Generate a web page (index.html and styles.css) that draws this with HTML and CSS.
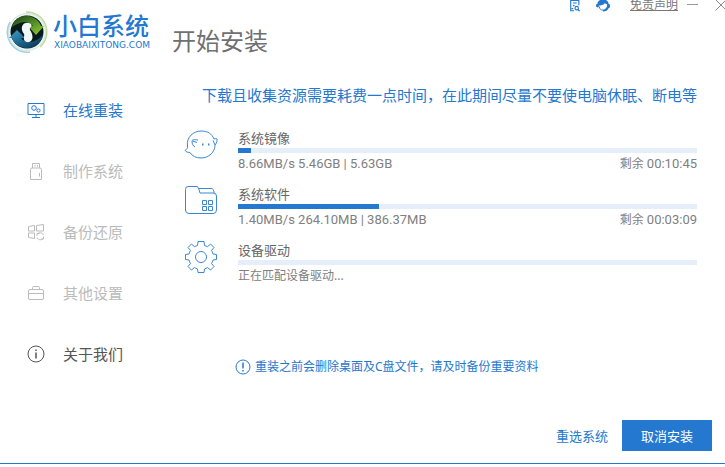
FILE: index.html
```html
<!DOCTYPE html>
<html lang="zh-CN">
<head>
<meta charset="utf-8">
<meta name="viewport" content="width=device-width, initial-scale=1">
<title>小白系统</title>
<link rel="stylesheet" href="styles.css">
</head>
<body>
<div class="window">
  <header class="header">
    <div class="brand">
      <svg class="logo" viewBox="0 0 44 44" aria-hidden="true">
        <defs>
          <linearGradient id="green" x1="0" y1="0" x2="1" y2="1"><stop offset="0" stop-color="#183b18"/><stop offset=".5" stop-color="#4f8c25"/><stop offset="1" stop-color="#9bcf35"/></linearGradient>
          <linearGradient id="blue" x1="0" y1="0" x2="1" y2="1"><stop offset="0" stop-color="#3f9fc9"/><stop offset=".5" stop-color="#1c6791"/><stop offset="1" stop-color="#092a42"/></linearGradient>
        </defs>
        <circle cx="22" cy="22" r="18.5" fill="#edf5f2" stroke="#d5e6df"/>
        <path d="M21 2A20 20 0 0 1 35 37" fill="none" stroke="#bcdc9a" stroke-width="1.5"/>
        <path d="M25 42A20 20 0 0 1 5 12" fill="none" stroke="#9fd0e4" stroke-width="1.5"/>
        <circle cx="22" cy="22" r="16.5" fill="#0b1a1c"/>
        <path d="M7 17C10 7 20 3 29 8C33 10 35 13 36 16H39L31 25L23 16H28C25 12 18 9 7 17Z" fill="url(#green)"/>
        <path d="M38 25C35 37 23 41 14 36C10 34 8 31 7 28H4L12 20L20 28H16C20 34 29 34 38 25Z" fill="url(#blue)"/>
        <path d="M26 14C21 11 16 14 17 20C18 24 20 23 19 27C18 31 22 34 26 31C29 28 27 23 25 20C24 17 28 17 26 14Z" fill="#f2f7f8"/>
      </svg>
      <div class="brand-text">
        <span class="brand-name">小白系统</span>
        <span class="brand-site">XIAOBAIXITONG.COM</span>
      </div>
    </div>
    <h1 class="title">开始安装</h1>
    <div class="tools">
      <button class="tool" type="button" aria-label="日志">
        <svg width="12" height="12" viewBox="0 0 12 14"><path d="M5 12.5H1V.5H10.500V6M3.500 3.500H8M3.500 6.500H5.500M2 10H4" fill="none" stroke="#2478cf" stroke-width="1.300"/><circle cx="8" cy="9.500" r="2" fill="none" stroke="#2478cf" stroke-width="1.300"/><path d="M9.500 11L11.500 13" stroke="#2478cf" stroke-width="1.500"/></svg>
      </button>
      <button class="tool tool-service" type="button" aria-label="客服">
        <svg width="16" height="12" viewBox="0 1 16 13"><path d="M2 5C2-1 14-1 14 5L15.500 6V9L14 10C13 12.500 11 13.500 8 13.500V11.500C10.500 11.500 12.500 9.500 12.500 6L10 4.500C8 6.500 6 7 3.500 7V8.500L2 9L.500 8V6Z" fill="#2478cf"/><path d="M4 8C4 11 6 12 8 12" fill="none" stroke="#2478cf"/></svg>
      </button>
      <a class="disclaimer" href="#">免责声明</a>
      <button class="tool" type="button" aria-label="最小化"><svg width="11" height="12" viewBox="0 0 11 12"><path d="M0 4.500H11" stroke="#999"/></svg></button>
      <button class="tool tool-close" type="button" aria-label="关闭"><svg width="12" height="12" viewBox="0 0 12 12"><path d="M.500-.500L11.500 10.500M11.500-.500L.500 10.500" stroke="#8b8b8b"/></svg></button>
    </div>
  </header>

  <nav class="nav">
    <a class="nav-item active" href="#">
      <svg class="nav-icon" viewBox="0 0 18 18"><path d="M1 2.500H17V13.500H1ZM9 13.500V16M5 16.500H13" /><circle cx="7" cy="7" r="2.300"/><circle cx="11.500" cy="9.500" r="1.600"/></svg>
      <span>在线重装</span></a>
    <a class="nav-item" href="#">
      <svg class="nav-icon" viewBox="0 0 18 18"><path d="M5.500 6V1.500H12.500V6M5 6H13Q14.500 6 14.500 7.500V17.500H3.500V7.500Q3.500 6 5 6ZM8 3V4.500M10.500 3V4.500M12.500 11V14.500"/></svg>
      <span>制作系统</span></a>
    <a class="nav-item" href="#">
      <svg class="nav-icon" viewBox="0 0 18 18"><path d="M1.500 3.500L7.500 2.500V8H1.500ZM9.500 2.500L16.500 1.500V8H9.500ZM1.500 10H7.500V15.500L1.500 14.500ZM10 13V10.500H12.500M10 11C12 9 15.500 9.500 16.500 12M16.500 13.500V16H14M16.500 15.500C14 17.500 11 17 10 14.500"/></svg>
      <span>备份还原</span></a>
    <a class="nav-item" href="#">
      <svg class="nav-icon" viewBox="0 0 18 18"><path d="M3 5.500H15Q16.500 5.500 16.500 7V14Q16.500 15.500 15 15.500H3Q1.500 15.500 1.500 14V7Q1.500 5.500 3 5.500ZM5.500 5.500V3.500Q5.500 2.500 6.500 2.500H11.500Q12.500 2.500 12.500 3.500V5.500M1.500 9.500H16.500"/></svg>
      <span>其他设置</span></a>
    <a class="nav-item about" href="#">
      <svg class="nav-icon" viewBox="0 0 18 18"><circle cx="9" cy="9" r="8"/><path d="M9 7.500V13.500M9 4.500V6" stroke-width="1.500"/></svg>
      <span>关于我们</span></a>
  </nav>

  <main class="main">
    <p class="notice">下载且收集资源需要耗费一点时间，在此期间尽量不要使电脑休眠、断电等</p>
    <ul class="tasks">
      <li class="task">
        <svg class="task-icon" viewBox="0 0 34 34"><path d="M1 21.500C3 20 4 19 3.500 17C2 8 10 2 17 2C24 2 28 5 30 10C32 9 33.500 9.500 33 11C33 13 32 15 31 16C31 23 25 29 17 29C12 29 8 27 6 23.500C4 23.500 2 23 1 21.500Z"/><path d="M14 11C11 10.500 8 10.500 8 12C8 15 9 17 11 18M8.500 12L13 13.500M31 16L29 11.500"/><path class="dots" d="M18 15.500H19.500M24 15.500H25.500"/></svg>
        <div class="task-body">
          <h2 id="task-image">系统镜像</h2>
          <div class="bar" role="progressbar" aria-labelledby="task-image" aria-valuenow="3"><div class="fill" style="width:2.8%"></div></div>
          <div class="stats"><span class="figures">8.66MB/s 5.46GB | 5.63GB</span><span>剩余 <span class="figures">00:10:45</span></span></div>
        </div>
      </li>
      <li class="task">
        <svg class="task-icon" viewBox="0 0 34 34"><path d="M4 1.500H13Q14 1.500 15 4.500L16 8H29Q32.500 8 32.500 11V25Q32.500 28.500 29 28.500H5Q1.500 28.500 1.500 25V4.500Q1.500 1.500 4 1.500ZM15 3.500H27Q30 3.500 30 8M18.500 15.500H22.500V19.500H18.500ZM24.500 15.500H28.500V19.500H24.500ZM18.500 21.500H22.500V25.500H18.500ZM24.500 21.500H28.500V25.500H24.500Z"/></svg>
        <div class="task-body">
          <h2 id="task-software">系统软件</h2>
          <div class="bar" role="progressbar" aria-labelledby="task-software" aria-valuenow="31"><div class="fill" style="width:30.8%"></div></div>
          <div class="stats"><span class="figures">1.40MB/s 264.10MB | 386.37MB</span><span>剩余 <span class="figures">00:03:09</span></span></div>
        </div>
      </li>
      <li class="task">
        <svg class="task-icon" viewBox="0 1 34 34"><path d="M14 1.500H20L20.500 5.500Q22 6 23.500 6.700L26.500 4L30 7.500L27.500 10.500Q28.500 12 29 14L32.500 14.500V19.500L29 20Q28.500 22 27.500 23.500L30 26.500L26.500 30L23.500 27.500Q22 28.500 20.500 29L20 32.500H14L13.500 29Q12 28.500 10.500 27.500L7.500 30L4 26.500L6.500 23.500Q5.500 22 5 20L1.500 19.500V14.500L5 14Q5.500 12 6.500 10.500L4 7.500L7.500 4L10.500 6.700Q12 6 13.500 5.500Z"/><circle cx="17" cy="17" r="5.500"/></svg>
        <div class="task-body">
          <h2 id="task-driver">设备驱动</h2>
          <div class="bar" role="progressbar" aria-labelledby="task-driver" aria-valuenow="0"></div>
          <div class="stats"><span>正在匹配设备驱动...</span></div>
        </div>
      </li>
    </ul>
    <p class="warning">
      <svg width="16" height="16" viewBox="0 0 16 16"><circle cx="8" cy="8" r="7" fill="none" stroke="#2478cf"/><path d="M8 3.500V9.500M8 11V12.500" stroke="#2478cf" stroke-width="1.500"/></svg>
      <span>重装之前会删除桌面及C盘文件，请及时备份重要资料</span>
    </p>
    <div class="actions">
      <a class="reselect" href="#">重选系统</a>
      <button class="cancel" type="button">取消安装</button>
    </div>
  </main>
</div>
</body>
</html>
```

FILE: styles.css
```css
* { box-sizing: border-box; }

body {
  margin: 0;
  background: #fff;
  color: #666;
  font: 12px/18px "Noto Sans", "Noto Sans CJK SC", sans-serif;
}

h1, h2, p, ul { margin: 0; padding: 0; font-weight: 400; }

a { color: inherit; text-decoration: none; }

button { font: inherit; border: 0; padding: 0; cursor: pointer; }

.window {
  display: grid;
  grid-template-columns: 172px 1fr;
  grid-template-rows: auto 1fr;
  min-height: calc(100vh - 3px);
  border-bottom: 1px solid #2478cf;
}

.header {
  grid-column: 1 / -1;
  display: grid;
  grid-template-columns: 172px 1fr auto;
  height: 64px;
}

.brand { display: flex; padding: 10px 0 0 5px; gap: 4px; }

.logo { width: 44px; height: 44px; flex: none; }

.brand-text { display: flex; flex-direction: column; color: #2478cf; }

.brand-name { font: 500 24px/30px "Noto Sans CJK SC", sans-serif; white-space: nowrap; }

.brand-site { font: 9px/10px "DejaVu Sans", sans-serif; padding-left: 1px; }

.title { padding-top: 24px; font-size: 24px; line-height: 34px; color: #707070; }

.tools { display: flex; align-items: flex-start; }

.tool { background: none; height: 12px; line-height: 0; }

.tool-service { margin-left: 14px; }

.disclaimer { margin: -4px 9px 0 19px; color: #777; text-decoration: underline; }

.tool-close { margin-left: 17px; margin-right: -2px; }

.nav { display: flex; flex-direction: column; gap: 37px; padding: 34px 0 0 27px; }

.nav-item {
  display: flex;
  align-items: center;
  gap: 18px;
  font-size: 15px;
  line-height: 24px;
  color: #bbb;
}

.nav-icon { width: 18px; height: 18px; fill: none; stroke: currentColor; }

.active { color: #2478cf; }

.about { color: #555; }

.main { display: flex; flex-direction: column; padding: 19px 28px 12px 12px; }

.notice { font-size: 15px; line-height: 24px; color: #2478cf; text-align: right; }

.tasks { list-style: none; padding-top: 22px; }

.task { display: flex; gap: 20px; height: 56px; }

.task-icon { width: 34px; height: 34px; flex: none; fill: none; stroke: #3c87d4; }

.dots { stroke-width: 2; }

.task-body { flex: 1; }

.task h2 { font-size: 13px; line-height: 18px; color: #666; }

.bar { height: 5px; margin-top: 1px; background: #e6eefa; }

.fill { height: 100%; background: #2478cf; }

.stats { display: flex; justify-content: space-between; padding-top: 2px; color: #808080; }

.figures { font-family: Roboto, sans-serif; font-size: 13px; }

.warning { display: flex; align-items: center; gap: 4px; padding: 61px 0 0 51px; color: #2478cf; }

.actions {
  display: flex;
  justify-content: flex-end;
  align-items: center;
  gap: 14px;
  margin-top: auto;
  margin-right: -15px;
  font-size: 13px;
}

.reselect { color: #2478cf; }

.cancel { width: 90px; height: 31px; background: #2478cf; color: #fff; }
```
